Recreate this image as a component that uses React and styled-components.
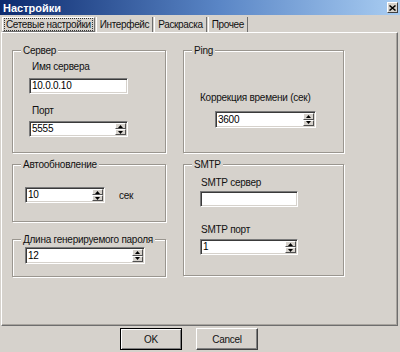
import React from 'react'
import styled, { createGlobalStyle } from 'styled-components'

const GlobalStyle = createGlobalStyle`
  * { box-sizing: border-box; }
  html, body {
    margin: 0;
    padding: 0;
    background: #d6d2cc;
  }
  body {
    font-family: "Liberation Sans", Arial, sans-serif;
    font-size: 10px;
    letter-spacing: -0.25px;
    color: #111;
  }
`

const Window = styled.div`
  width: 400px;
  height: 352px;
  background: #d6d2cc;
  display: flex;
  flex-direction: column;
`

const TitleBar = styled.div`
  height: 15px;
  display: flex;
  align-items: center;
  justify-content: space-between;
  padding: 0 2px 0 3px;
  background: linear-gradient(to right, #0c2a6e 0%, #5a86c6 55%, #a9cdf2 100%);
  color: #fff;
  font-weight: bold;
  font-size: 11px;
  letter-spacing: 0;
`

const CloseBtn = styled.div`
  width: 11px;
  height: 11px;
  background: #d6d2cc;
  border: 1px solid;
  border-color: #fff #404040 #404040 #fff;
  display: flex;
  align-items: center;
  justify-content: center;
`

const TabRow = styled.div`
  display: flex;
  align-items: flex-end;
  height: 17px;
  padding: 2px 0 0 2px;
`

const Tab = styled.div`
  height: 15px;
  padding: 0 ${({ active }) => (active ? '1px' : '1px')};
  display: flex;
  align-items: center;
  margin-right: 1px;
  border-left: 1px solid #fff;
  border-right: 1px solid #6e6e6e;
  letter-spacing: -0.35px;
  ${({ active }) => active && `
    border-top: 1px solid #fff;
    border-bottom: 1px solid #6e6e6e;
  `}
`

const TabLabel = styled.span`
  padding: 0 1px;
  border: 1px dotted ${({ focus }) => (focus ? '#333' : 'transparent')};
  line-height: 11px;
`

const Panel = styled.div`
  margin: 0 2px 0 1px;
  height: 294px;
  border: 1px solid;
  border-color: #fff #6e6e6e #6e6e6e #fff;
  box-shadow: inset -1px -1px 0 #a8a49e;
  padding: 17px 0 0 10px;
  display: flex;
  gap: 17px;
`

const Column = styled.div`
  width: ${({ w }) => w}px;
  display: flex;
  flex-direction: column;
`

const Group = styled.div`
  position: relative;
  height: ${({ h }) => h}px;
  margin-top: ${({ mt }) => mt || 0}px;
  border: 1px solid #9a968f;
  box-shadow: inset 1px 1px 0 #fff, 1px 1px 0 #fff;
  padding: ${({ pad }) => pad};
  display: flex;
  flex-direction: column;
  align-items: flex-start;
`

const Legend = styled.span`
  position: absolute;
  top: -7px;
  left: 8px;
  padding: 0 2px;
  background: #d6d2cc;
  line-height: 13px;
  white-space: nowrap;
`

const Label = styled.div`
  line-height: 13px;
  margin: ${({ m }) => m || '0'};
  white-space: nowrap;
`

const Field = styled.div`
  width: ${({ w }) => w}px;
  height: ${({ h }) => h || 16}px;
  margin: ${({ m }) => m || '0'};
  background: #fff;
  border: 1px solid;
  border-color: #7a7a7a #fff #fff #7a7a7a;
  box-shadow: inset 1px 1px 0 #3a3a3a, inset -1px -1px 0 #d6d2cc;
  display: flex;
  align-items: center;
  padding: 0 1px 0 2px;
  color: #000;
`

const Value = styled.span`
  flex: 1;
  line-height: 12px;
`

const Spin = styled.div`
  width: 11px;
  height: 100%;
  padding: 1px 0;
  display: flex;
  flex-direction: column;
`

const SpinHalf = styled.div`
  flex: 1;
  background: #d6d2cc;
  border: 1px solid;
  border-color: #fff #505050 #505050 #fff;
  display: flex;
  align-items: center;
  justify-content: center;
`

const Row = styled.div`
  display: flex;
  align-items: center;
  margin: ${({ m }) => m || '0'};
`

const Footer = styled.div`
  flex: 1;
  display: flex;
  align-items: flex-start;
  padding: 2px 0 0 120px;
  gap: 14px;
`

const Button = styled.div`
  width: 62px;
  height: 22px;
  display: flex;
  align-items: center;
  justify-content: center;
  background: #d6d2cc;
  border: 1px solid;
  border-color: ${({ primary }) => (primary ? '#000' : '#fff #404040 #404040 #fff')};
  box-shadow: ${({ primary }) =>
    primary
      ? 'inset 1px 1px 0 #fff, inset -1px -1px 0 #808080'
      : 'inset -1px -1px 0 #808080'};
`

function Arrow({ up }) {
  return (
    <svg width="5" height="3" viewBox="0 0 5 3">
      <path d={up ? 'M0 3 L2.5 0 L5 3 Z' : 'M0 0 L2.5 3 L5 0 Z'} fill="#000" />
    </svg>
  )
}

function SpinBox({ value, ...props }) {
  return (
    <Field {...props}>
      <Value>{value}</Value>
      <Spin>
        <SpinHalf><Arrow up /></SpinHalf>
        <SpinHalf><Arrow /></SpinHalf>
      </Spin>
    </Field>
  )
}

export default function App() {
  return (
    <Window>
      <GlobalStyle />
      <TitleBar>
        <span>Настройки</span>
        <CloseBtn>
          <svg width="7" height="6" viewBox="0 0 7 6">
            <path d="M0.5 0.5 L6.5 5.5 M6.5 0.5 L0.5 5.5" stroke="#000" strokeWidth="1.5" />
          </svg>
        </CloseBtn>
      </TitleBar>
      <TabRow>
        <Tab active><TabLabel focus>Сетевые настройки</TabLabel></Tab>
        <Tab><TabLabel>Интерфейс</TabLabel></Tab>
        <Tab><TabLabel>Раскраска</TabLabel></Tab>
        <Tab><TabLabel>Прочее</TabLabel></Tab>
      </TabRow>
      <Panel>
        <Column w={154}>
          <Group h={103} pad="9px 0 0 16px">
            <Legend>Сервер</Legend>
            <Label m="0 0 0 3px">Имя сервера</Label>
            <Field w={99} m="5px 0 0 0"><Value>10.0.0.10</Value></Field>
            <Label m="10px 0 0 3px">Порт</Label>
            <SpinBox w={99} m="4px 0 0 0" value="5555" />
          </Group>
          <Group h={58} mt={11} pad="22px 0 0 12px">
            <Legend>Автообновление</Legend>
            <Row>
              <SpinBox w={80} value="10" />
              <Label m="0 0 0 14px">сек</Label>
            </Row>
          </Group>
          <Group h={38} mt={17} pad="7px 0 0 12px">
            <Legend>Длина генерируемого пароля</Legend>
            <SpinBox w={120} h={17} value="12" />
          </Group>
        </Column>
        <Column w={161}>
          <Group h={103} pad="40px 0 0 16px">
            <Legend>Ping</Legend>
            <Label>Коррекция времени (сек)</Label>
            <SpinBox w={101} h={17} m="7px 0 0 15px" value="3600" />
          </Group>
          <Group h={112} mt={11} pad="11px 0 0 16px">
            <Legend>SMTP</Legend>
            <Label m="0 0 0 1px">SMTP сервер</Label>
            <Field w={98} m="2px 0 0 0" />
            <Label m="16px 0 0 1px">SMTP порт</Label>
            <SpinBox w={98} m="3px 0 0 0" value="1" />
          </Group>
        </Column>
      </Panel>
      <Footer>
        <Button primary>OK</Button>
        <Button>Cancel</Button>
      </Footer>
    </Window>
  )
}
